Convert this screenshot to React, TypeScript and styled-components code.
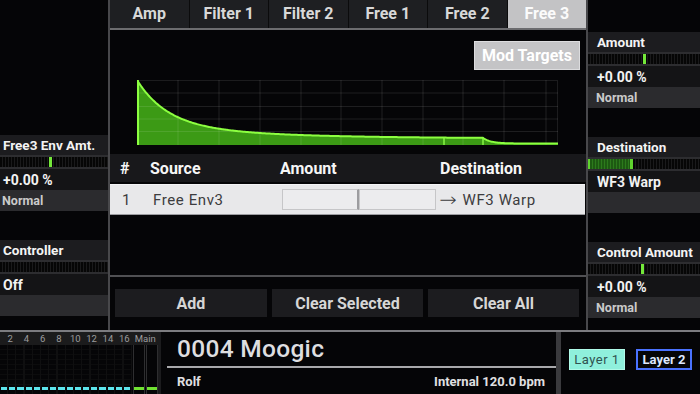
import React from "react";
import styled, { createGlobalStyle } from "styled-components";

const Global = createGlobalStyle`
  html, body { margin: 0; padding: 0; background: #050507; }
  body { font-family: Roboto, "Liberation Sans", "DejaVu Sans", sans-serif; }
  * { box-sizing: border-box; }
`;

const Screen = styled.div`
  width: 700px;
  height: 394px;
  overflow: hidden;
  background: #050507;
  display: flex;
  flex-direction: column;
  color: #ececec;
`;

const Top = styled.div`
  height: 330px;
  display: grid;
  grid-template-columns: 110px 476px 114px;
`;

const SidePanel = styled.div<{ $side: "left" | "right"; $top: number }>`
  display: flex;
  flex-direction: column;
  gap: 29px;
  padding-top: ${(p) => p.$top}px;
  border-${(p) => (p.$side === "left" ? "right" : "left")}: 2px solid #48484b;
`;

const Group = styled.div`
  display: flex;
  flex-direction: column;
`;

const ParamLabel = styled.div<{ $pad: number }>`
  height: 20px;
  background: #1c1c1f;
  display: flex;
  align-items: center;
  padding-left: ${(p) => p.$pad}px;
  font-weight: 700;
  font-size: 13.5px;
  color: #f4f4f4;
  white-space: nowrap;
`;

const Slider = styled.div`
  position: relative;
  height: 14px;
  border-top: 2px solid #2d2d30;
  border-bottom: 2px solid #2d2d30;
  background: repeating-linear-gradient(90deg, #060606 0px, #060606 2px, #1a1a1b 2px, #1a1a1b 3px);
`;

const Knob = styled.div`
  position: absolute;
  top: 0;
  bottom: 0;
  width: 3px;
  background: #74e83a;
`;

const Fill = styled.div`
  position: absolute;
  top: 0;
  bottom: 0;
  left: 0;
  background: repeating-linear-gradient(90deg, #1d5a12 0px, #1d5a12 2px, #2c7a1c 2px, #2c7a1c 3px);
  border-left: 2px solid #5fd22e;
  border-right: 3px solid #5fd22e;
`;

const ValueRow = styled.div<{ $pad: number }>`
  height: 21px;
  background: #141416;
  display: flex;
  align-items: center;
  padding-left: ${(p) => p.$pad}px;
  font-weight: 700;
  font-size: 14px;
  color: #f2f2f2;
  white-space: nowrap;
`;

const ModeRow = styled.div<{ $pad: number }>`
  height: 21px;
  background: #2b2b2e;
  display: flex;
  align-items: center;
  padding-left: ${(p) => p.$pad}px;
  font-weight: 700;
  font-size: 12.5px;
  color: #cacaca;
`;

const Center = styled.div`
  display: flex;
  flex-direction: column;
`;

const Tabs = styled.div`
  height: 30px;
  display: flex;
  gap: 1px;
  background: #0b0b0c;
  border-bottom: 2px solid #6c6c6f;
`;

const Tab = styled.div<{ $active?: boolean }>`
  flex: 1;
  display: flex;
  align-items: center;
  justify-content: center;
  padding-bottom: 2px;
  background: ${(p) => (p.$active ? "#c3c3c5" : "#1e1f22")};
  color: ${(p) => (p.$active ? "#fbfbfb" : "#d8d8d8")};
  font-weight: 700;
  font-size: 16px;
`;

const ModBar = styled.div`
  display: flex;
  justify-content: flex-end;
  padding: 11px 6px 0 0;
`;

const ModButton = styled.div`
  width: 106px;
  height: 29px;
  background: #c4c4c6;
  border: 1px solid #dcdcde;
  color: #ffffff;
  font-weight: 700;
  font-size: 16px;
  display: flex;
  align-items: center;
  justify-content: center;
`;

const GraphBox = styled.div`
  margin: 10px 28px 0 27px;
  height: 66px;
  svg { display: block; }
`;

const TableGrid = styled.div`
  display: grid;
  grid-template-columns: 30px 130px 160px 1fr;
  padding-left: 10px;
  align-items: center;
`;

const Header = styled(TableGrid)`
  margin-top: 8px;
  height: 28px;
  background: #18181b;
  font-weight: 700;
  font-size: 16px;
  color: #f6f6f6;
`;

const Row = styled(TableGrid)`
  margin-top: 2px;
  height: 31px;
  margin-right: 1px;
  background: #e8e8ea;
  border-top: 1px solid #f4f4f6;
  border-bottom: 1px solid #9c9ca0;
  font-size: 15px;
  color: #3c3c3e;
  letter-spacing: 0.6px;
`;

const Cell = styled.div<{ $indent?: number }>`
  padding-left: ${(p) => p.$indent ?? 0}px;
  white-space: nowrap;
  display: flex;
  align-items: center;
`;

const Arrow = styled.span`
  font-family: "DejaVu Sans", sans-serif;
  font-size: 19px;
  font-weight: 300;
  line-height: 1;
  margin-right: 6px;
  transform: scaleX(1.1);
`;

const AmountCell = styled.div`
  display: flex;
  padding-left: 2px;
`;

const AmountBox = styled.div<{ $first?: boolean }>`
  width: 77px;
  height: 21px;
  background: #ececee;
  border: 1px solid #c6c6c8;
  ${(p) => (p.$first ? "border-right: 2px solid #9c9c9f;" : "")}
`;

const Spacer = styled.div`
  flex: 1;
`;

const ButtonBar = styled.div`
  border-top: 2px solid #505053;
  display: grid;
  grid-template-columns: 152px 151px 151px;
  gap: 5px;
  padding: 12px 6px 13px 5px;
`;

const ActionButton = styled.div`
  height: 28px;
  background: #1c1c1f;
  color: #d6d6d6;
  font-weight: 700;
  font-size: 16px;
  display: flex;
  align-items: center;
  justify-content: center;
`;

const Bottom = styled.div`
  height: 64px;
  border-top: 2px solid #7c7c80;
  display: flex;
`;

const Meter = styled.div`
  width: 161px;
  border-right: 3px solid #1b1b1d;
  display: flex;
  flex-direction: column;
`;

const MeterLabels = styled.div`
  height: 13px;
  background: #1b1b1c;
  display: flex;
  align-items: center;
  padding-left: 2px;
  font-size: 9.5px;
  color: #9c9c9e;
`;

const MeterLabel = styled.div<{ $w: number }>`
  width: ${(p) => p.$w}px;
  text-align: center;
`;

const MeterBody = styled.div`
  flex: 1;
  display: flex;
`;

const Channels = styled.div`
  width: 133px;
  display: flex;
  align-items: flex-end;
  padding: 0 0 4px 1px;
  background:
    repeating-linear-gradient(90deg, transparent 0px, transparent 7px, #0f0f10 7px, #0f0f10 8.25px),
    repeating-linear-gradient(0deg, transparent 0px, transparent 4px, #0c0c0d 4px, #0c0c0d 5px);
`;

const Dash = styled.div`
  flex: 1;
  height: 3px;
  margin-right: 2px;
  background: #5ce4ec;
`;

const MainCol = styled.div`
  width: 12px;
  margin-left: 1px;
  border-left: 1px solid #2e2e30;
  border-right: 1px solid #2e2e30;
  display: flex;
  align-items: flex-end;
  padding: 0 0 4px 0;
`;

const MainBar = styled.div`
  flex: 1;
  height: 3px;
  background: #70e232;
`;

const Preset = styled.div`
  flex: 1;
  margin-left: 6px;
  display: flex;
  flex-direction: column;
`;

const PresetName = styled.div`
  height: 36px;
  border-bottom: 2px solid #a8a8ab;
  display: flex;
  align-items: center;
  padding: 0 0 2px 10px;
  font-size: 24.5px;
  font-weight: 500;
  color: #dedee0;
  letter-spacing: 0.3px;
`;

const PresetInfo = styled.div`
  flex: 1;
  display: flex;
  align-items: center;
  justify-content: space-between;
  padding: 0 11px 0 10px;
  font-size: 13px;
  font-weight: 700;
  color: #e0e0e2;
`;

const VBar = styled.div`
  width: 5px;
  background: #3a3a3d;
`;

const Layers = styled.div`
  width: 139px;
  display: flex;
  gap: 11px;
  padding: 17px 0 0 8px;
`;

const LayerButton = styled.div<{ $active?: boolean }>`
  width: 56px;
  height: 21px;
  display: flex;
  align-items: center;
  justify-content: center;
  font-size: 13px;
  ${(p) =>
    p.$active
      ? `background:#8ff0dc; border:1px solid #b0fbe9; color:#2f5250; font-weight:400; letter-spacing:0.5px;`
      : `background:#050507; border:2px solid #4a72ff; color:#dde8ff; font-weight:700;`}
`;

type SliderSpec = { kind: "knob"; pos: number } | { kind: "fill"; pos: number } | { kind: "none" };
type GroupSpec = { label: string; slider: SliderSpec; value: string; mode: string };

const leftGroups: GroupSpec[] = [
  { label: "Free3 Env Amt.", slider: { kind: "knob", pos: 0.47 }, value: "+0.00 %", mode: "Normal" },
  { label: "Controller", slider: { kind: "none" }, value: "Off", mode: "" },
];

const rightGroups: GroupSpec[] = [
  { label: "Amount", slider: { kind: "knob", pos: 0.5 }, value: "+0.00 %", mode: "Normal" },
  { label: "Destination", slider: { kind: "fill", pos: 0.4 }, value: "WF3 Warp", mode: "" },
  { label: "Control Amount", slider: { kind: "knob", pos: 0.49 }, value: "+0.00 %", mode: "Normal" },
];

function Param({ g, pad }: { g: GroupSpec; pad: number }) {
  return (
    <Group>
      <ParamLabel $pad={pad}>{g.label}</ParamLabel>
      <Slider>
        {g.slider.kind === "knob" && <Knob style={{ left: `calc(${g.slider.pos * 100}% - 1.5px)` }} />}
        {g.slider.kind === "fill" && <Fill style={{ width: `${g.slider.pos * 100}%` }} />}
      </Slider>
      <ValueRow $pad={pad}>{g.value}</ValueRow>
      <ModeRow $pad={pad - 1}>{g.mode}</ModeRow>
    </Group>
  );
}

const GW = 421;
const GH = 65;

function envY(x: number): number {
  if (x <= 346) {
    return 58.5 * (1 - (0.75 * Math.exp(-x / 30) + 0.25 * Math.exp(-x / 110)));
  }
  const y0 = 58.5 * (1 - (0.75 * Math.exp(-346 / 30) + 0.25 * Math.exp(-346 / 110)));
  return 63.5 - (63.5 - y0) * Math.exp(-(x - 346) / 8);
}

function Envelope() {
  const pts: string[] = [];
  for (let x = 0; x <= GW; x += 1) pts.push(`${x},${envY(x).toFixed(2)}`);
  const curve = `M1,${GH} L1,0.8 L${pts.join(" L")}`;
  const fill = `M0,${GH} L0,0 L${pts.join(" L")} L${GW},${GH} Z`;
  const vLines = [41, 82, 123, 164, 204, 245, 286, 326, 367, 409];
  const hLines = [13, 26.5, 39, 51.5];
  return (
    <svg width={GW} height={GH + 1} viewBox={`0 0 ${GW} ${GH + 1}`}>
      <rect x={0.5} y={0.5} width={GW - 1} height={GH - 1} fill="none" stroke="#1c1c1e" />
      <path d={fill} fill="#3c9a15" />
      {vLines.map((x) => (
        <line key={"v" + x} x1={x} y1={0} x2={x} y2={GH} stroke="rgba(255,255,255,0.11)" strokeWidth={1} />
      ))}
      {hLines.map((y) => (
        <line key={"h" + y} x1={0} y1={y} x2={GW} y2={y} stroke="rgba(255,255,255,0.1)" strokeWidth={1} />
      ))}
      <line x1={307} y1={envY(307)} x2={307} y2={GH} stroke="#86f444" strokeWidth={1.5} />
      <line x1={346} y1={envY(346)} x2={346} y2={GH} stroke="#86f444" strokeWidth={1.5} />
      <path d={curve} fill="none" stroke="#8cff40" strokeWidth={2} strokeLinejoin="round" />
    </svg>
  );
}

const tabs = ["Amp", "Filter 1", "Filter 2", "Free 1", "Free 2", "Free 3"];
const meterNums = ["2", "4", "6", "8", "10", "12", "14", "16"];

export default function App() {
  return (
    <Screen>
      <Global />
      <Top>
        <SidePanel $side="left" $top={135}>
          {leftGroups.map((g) => (
            <Param key={g.label} g={g} pad={3} />
          ))}
        </SidePanel>
        <Center>
          <Tabs>
            {tabs.map((t) => (
              <Tab key={t} $active={t === "Free 3"}>
                {t}
              </Tab>
            ))}
          </Tabs>
          <ModBar>
            <ModButton>Mod Targets</ModButton>
          </ModBar>
          <GraphBox>
            <Envelope />
          </GraphBox>
          <Header>
            <Cell>#</Cell>
            <Cell>Source</Cell>
            <Cell>Amount</Cell>
            <Cell>Destination</Cell>
          </Header>
          <Row>
            <Cell $indent={2}>1</Cell>
            <Cell $indent={3}>Free Env3</Cell>
            <AmountCell>
              <AmountBox $first />
              <AmountBox />
            </AmountCell>
            <Cell>
              <Arrow>→</Arrow>WF3 Warp
            </Cell>
          </Row>
          <Spacer />
          <ButtonBar>
            <ActionButton>Add</ActionButton>
            <ActionButton>Clear Selected</ActionButton>
            <ActionButton>Clear All</ActionButton>
          </ButtonBar>
        </Center>
        <SidePanel $side="right" $top={32}>
          {rightGroups.map((g) => (
            <Param key={g.label} g={g} pad={9} />
          ))}
        </SidePanel>
      </Top>
      <Bottom>
        <Meter>
          <MeterLabels>
            {meterNums.map((n) => (
              <MeterLabel key={n} $w={16.5}>
                {n}
              </MeterLabel>
            ))}
            <MeterLabel $w={26}>Main</MeterLabel>
          </MeterLabels>
          <MeterBody>
            <Channels>
              {Array.from({ length: 16 }).map((_, i) => (
                <Dash key={i} />
              ))}
            </Channels>
            <MainCol>
              <MainBar />
            </MainCol>
            <MainCol>
              <MainBar />
            </MainCol>
          </MeterBody>
        </Meter>
        <Preset>
          <PresetName>0004 Moogic</PresetName>
          <PresetInfo>
            <span>Rolf</span>
            <span>Internal 120.0 bpm</span>
          </PresetInfo>
        </Preset>
        <VBar />
        <Layers>
          <LayerButton $active>Layer 1</LayerButton>
          <LayerButton>Layer 2</LayerButton>
        </Layers>
      </Bottom>
    </Screen>
  );
}
